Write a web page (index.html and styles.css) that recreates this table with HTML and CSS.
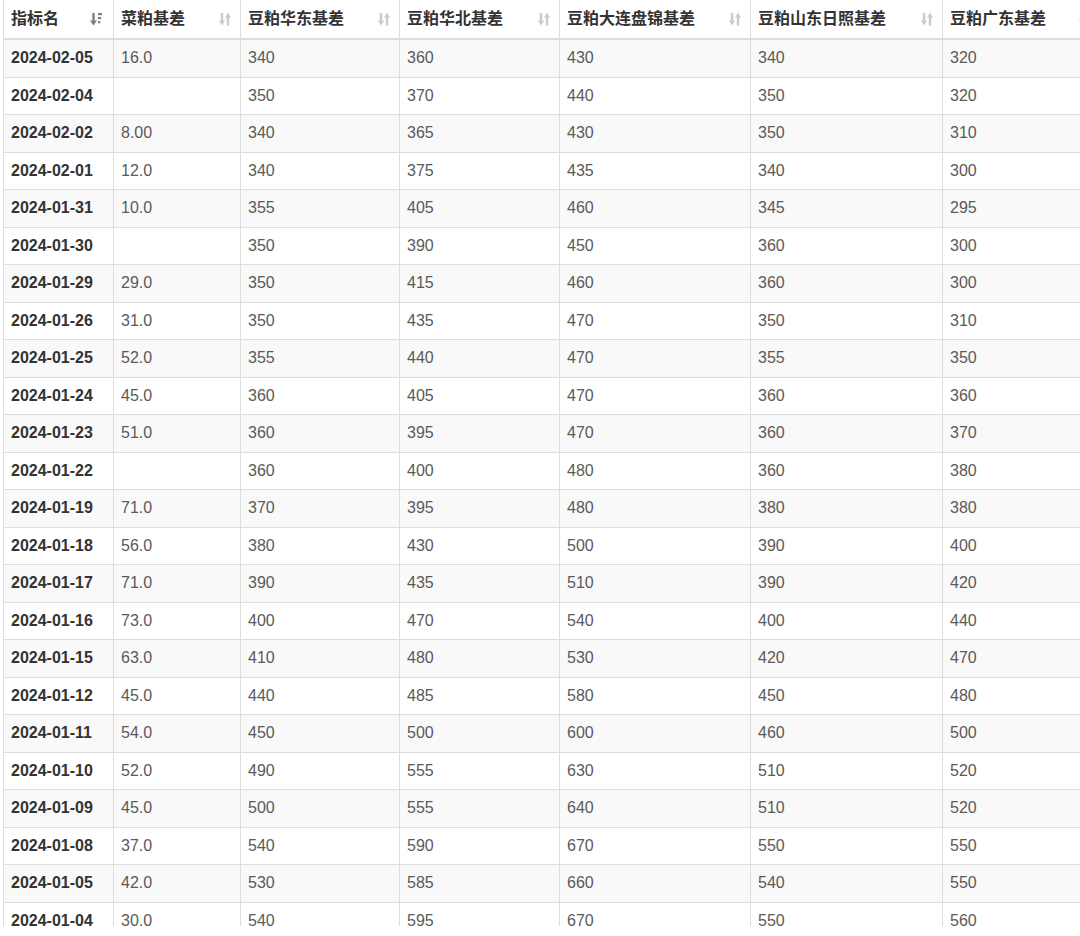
FILE: index.html
```html
<!DOCTYPE html>
<html lang="zh">
<head>
<meta charset="utf-8">
<title>基差表</title>
<link rel="stylesheet" href="styles.css">
</head>
<body>
<div class="viewport">
<table class="grid">
  <colgroup>
    <col class="c1"><col class="c2"><col class="c3"><col class="c4"><col class="c5"><col class="c6"><col class="c7">
  </colgroup>
  <thead>
    <tr>
      <th><div class="th-in"><span>指标名</span><svg class="sort active" viewBox="0 0 12 14"><path d="M3.5 1v8.5" stroke="currentColor" stroke-width="2.4"/><path d="M0 8.5h7l-3.5 5z" fill="currentColor"/><rect x="8" y="1" width="4" height="2.2" fill="currentColor"/><rect x="8" y="5" width="3.2" height="2.2" fill="currentColor"/><rect x="8" y="9" width="2.2" height="2.2" fill="currentColor"/></svg></div></th>
      <th><div class="th-in"><span>菜粕基差</span><svg class="sort" viewBox="0 0 12 14"><path d="M3 1v8.5" stroke="currentColor" stroke-width="2.4"/><path d="M0 8.5h6l-3 5z" fill="currentColor"/><path d="M9 4.5v9" stroke="currentColor" stroke-width="2.4"/><path d="M6 5.5h6l-3-5z" fill="currentColor"/></svg></div></th>
      <th><div class="th-in"><span>豆粕华东基差</span><svg class="sort" viewBox="0 0 12 14"><path d="M3 1v8.5" stroke="currentColor" stroke-width="2.4"/><path d="M0 8.5h6l-3 5z" fill="currentColor"/><path d="M9 4.5v9" stroke="currentColor" stroke-width="2.4"/><path d="M6 5.5h6l-3-5z" fill="currentColor"/></svg></div></th>
      <th><div class="th-in"><span>豆粕华北基差</span><svg class="sort" viewBox="0 0 12 14"><path d="M3 1v8.5" stroke="currentColor" stroke-width="2.4"/><path d="M0 8.5h6l-3 5z" fill="currentColor"/><path d="M9 4.5v9" stroke="currentColor" stroke-width="2.4"/><path d="M6 5.5h6l-3-5z" fill="currentColor"/></svg></div></th>
      <th><div class="th-in"><span>豆粕大连盘锦基差</span><svg class="sort" viewBox="0 0 12 14"><path d="M3 1v8.5" stroke="currentColor" stroke-width="2.4"/><path d="M0 8.5h6l-3 5z" fill="currentColor"/><path d="M9 4.5v9" stroke="currentColor" stroke-width="2.4"/><path d="M6 5.5h6l-3-5z" fill="currentColor"/></svg></div></th>
      <th><div class="th-in"><span>豆粕山东日照基差</span><svg class="sort" viewBox="0 0 12 14"><path d="M3 1v8.5" stroke="currentColor" stroke-width="2.4"/><path d="M0 8.5h6l-3 5z" fill="currentColor"/><path d="M9 4.5v9" stroke="currentColor" stroke-width="2.4"/><path d="M6 5.5h6l-3-5z" fill="currentColor"/></svg></div></th>
      <th><div class="th-in"><span>豆粕广东基差</span><svg class="sort" viewBox="0 0 12 14"><path d="M3 1v8.5" stroke="currentColor" stroke-width="2.4"/><path d="M0 8.5h6l-3 5z" fill="currentColor"/><path d="M9 4.5v9" stroke="currentColor" stroke-width="2.4"/><path d="M6 5.5h6l-3-5z" fill="currentColor"/></svg></div></th>
    </tr>
  </thead>
  <tbody>
    <tr><td>2024-02-05</td><td>16.0</td><td>340</td><td>360</td><td>430</td><td>340</td><td>320</td></tr>
    <tr><td>2024-02-04</td><td></td><td>350</td><td>370</td><td>440</td><td>350</td><td>320</td></tr>
    <tr><td>2024-02-02</td><td>8.00</td><td>340</td><td>365</td><td>430</td><td>350</td><td>310</td></tr>
    <tr><td>2024-02-01</td><td>12.0</td><td>340</td><td>375</td><td>435</td><td>340</td><td>300</td></tr>
    <tr><td>2024-01-31</td><td>10.0</td><td>355</td><td>405</td><td>460</td><td>345</td><td>295</td></tr>
    <tr><td>2024-01-30</td><td></td><td>350</td><td>390</td><td>450</td><td>360</td><td>300</td></tr>
    <tr><td>2024-01-29</td><td>29.0</td><td>350</td><td>415</td><td>460</td><td>360</td><td>300</td></tr>
    <tr><td>2024-01-26</td><td>31.0</td><td>350</td><td>435</td><td>470</td><td>350</td><td>310</td></tr>
    <tr><td>2024-01-25</td><td>52.0</td><td>355</td><td>440</td><td>470</td><td>355</td><td>350</td></tr>
    <tr><td>2024-01-24</td><td>45.0</td><td>360</td><td>405</td><td>470</td><td>360</td><td>360</td></tr>
    <tr><td>2024-01-23</td><td>51.0</td><td>360</td><td>395</td><td>470</td><td>360</td><td>370</td></tr>
    <tr><td>2024-01-22</td><td></td><td>360</td><td>400</td><td>480</td><td>360</td><td>380</td></tr>
    <tr><td>2024-01-19</td><td>71.0</td><td>370</td><td>395</td><td>480</td><td>380</td><td>380</td></tr>
    <tr><td>2024-01-18</td><td>56.0</td><td>380</td><td>430</td><td>500</td><td>390</td><td>400</td></tr>
    <tr><td>2024-01-17</td><td>71.0</td><td>390</td><td>435</td><td>510</td><td>390</td><td>420</td></tr>
    <tr><td>2024-01-16</td><td>73.0</td><td>400</td><td>470</td><td>540</td><td>400</td><td>440</td></tr>
    <tr><td>2024-01-15</td><td>63.0</td><td>410</td><td>480</td><td>530</td><td>420</td><td>470</td></tr>
    <tr><td>2024-01-12</td><td>45.0</td><td>440</td><td>485</td><td>580</td><td>450</td><td>480</td></tr>
    <tr><td>2024-01-11</td><td>54.0</td><td>450</td><td>500</td><td>600</td><td>460</td><td>500</td></tr>
    <tr><td>2024-01-10</td><td>52.0</td><td>490</td><td>555</td><td>630</td><td>510</td><td>520</td></tr>
    <tr><td>2024-01-09</td><td>45.0</td><td>500</td><td>555</td><td>640</td><td>510</td><td>520</td></tr>
    <tr><td>2024-01-08</td><td>37.0</td><td>540</td><td>590</td><td>670</td><td>550</td><td>550</td></tr>
    <tr><td>2024-01-05</td><td>42.0</td><td>530</td><td>585</td><td>660</td><td>540</td><td>550</td></tr>
    <tr><td>2024-01-04</td><td>30.0</td><td>540</td><td>595</td><td>670</td><td>550</td><td>560</td></tr>
  </tbody>
</table>
</div>
</body>
</html>
```
FILE: styles.css
```css
html, body {
  margin: 0;
  padding: 0;
  background: #fff;
}
body {
  font-family: "Liberation Sans", Arial, "Noto Sans CJK SC", sans-serif;
  font-size: 16px;
  color: #333;
  overflow: hidden;
}
.viewport {
  height: 926px;
  overflow: hidden;
  padding-left: 3px;
}
.grid {
  border-collapse: collapse;
  table-layout: fixed;
  width: 1097px;
}
.c1 { width: 110px; }
.c2 { width: 127px; }
.c3 { width: 159px; }
.c4 { width: 160px; }
.c5 { width: 191px; }
.c6 { width: 192px; }
.c7 { width: 158px; }
.grid th,
.grid td {
  border: 1px solid #ddd;
  padding: 0 8px 0 7px;
  text-align: left;
  vertical-align: middle;
  white-space: nowrap;
  overflow: hidden;
}
.grid th {
  border-top: 0;
  border-bottom: 2px solid #ddd;
  height: 34px;
  padding-bottom: 4px;
  font-weight: bold;
  color: #333;
}
.th-in {
  display: flex;
  align-items: center;
  justify-content: space-between;
}
.sort {
  width: 12px;
  height: 14px;
  margin-right: 1px;
  margin-top: 3px;
  color: #cacaca;
  flex: none;
}
.sort.active {
  color: #808080;
  margin-right: 3px;
}
.grid td {
  height: 36.5px;
  line-height: 20px;
  color: #5a5a5a;
}
.grid td:first-child {
  font-weight: bold;
  color: #333;
}
.grid tbody tr:nth-child(odd) td {
  background: #f9f9f9;
}
```
